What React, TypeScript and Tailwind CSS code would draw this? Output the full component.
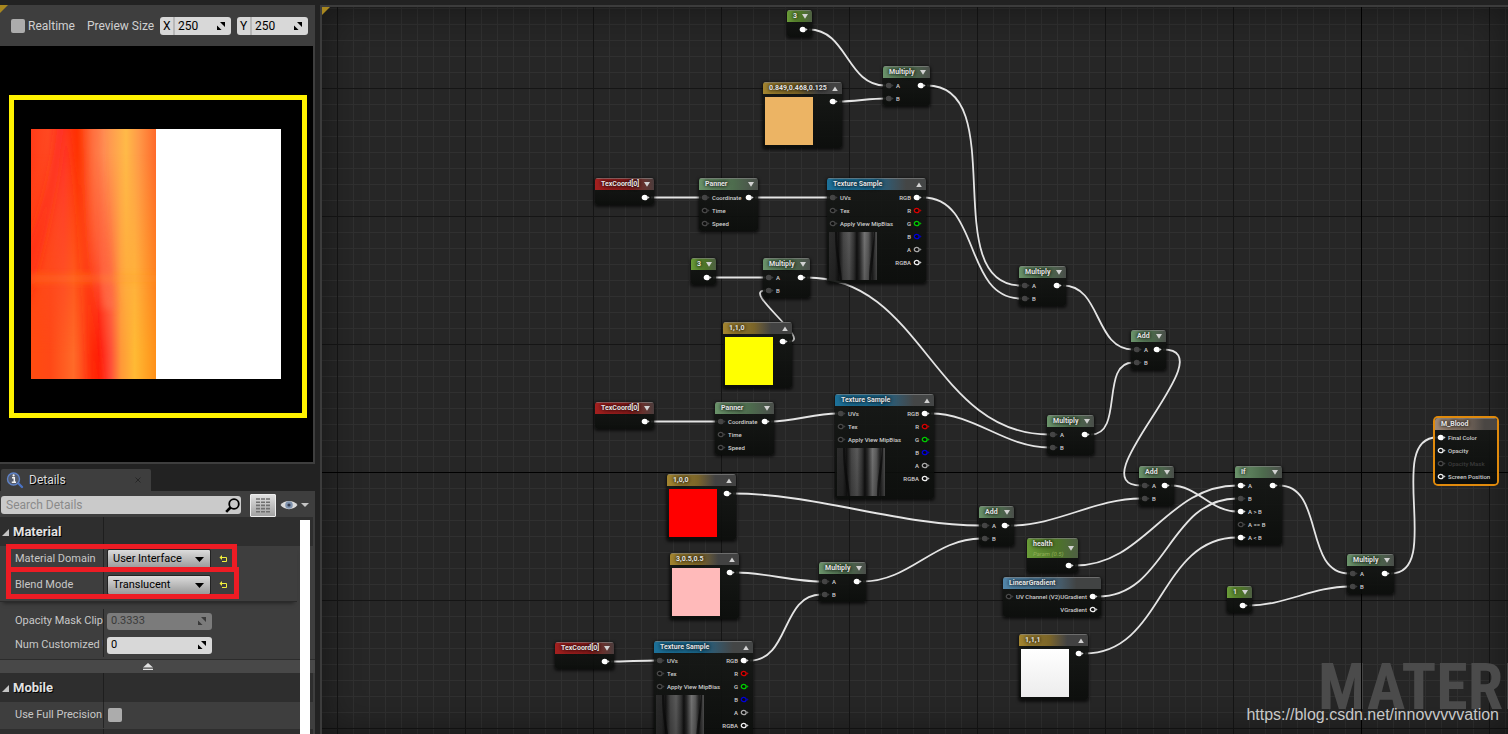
import React from 'react';

type PinKind = 'wired' | 'white' | 'open' | 'ring' | 'red' | 'green' | 'blue' | 'alpha';
type Tone = 'math' | 'constant' | 'vector' | 'coord' | 'texture' | 'gradient' | 'result';

interface Pin {
  label: string;
  kind: PinKind;
  muted?: boolean;
}

interface GraphNode {
  id: string;
  title: string;
  subtitle?: string;
  tone: Tone;
  x: number;
  y: number;
  w: number;
  inputs?: Pin[];
  outputs: Pin[];
  swatch?: string;
  texture?: boolean;
  open?: boolean;
  selected?: boolean;
}

interface Wire {
  from: string;
  to: string;
  input: number;
  bend?: number;
}

const PIN_COLORS: Record<PinKind, { stroke: string; fill: string }> = {
  wired: { stroke: '#454545', fill: '#454545' },
  white: { stroke: '#ffffff', fill: '#ffffff' },
  open: { stroke: '#484848', fill: '#0c0c0c' },
  ring: { stroke: '#f0f0f0', fill: '#0c0c0c' },
  red: { stroke: '#d80000', fill: '#0c0c0c' },
  green: { stroke: '#00cc00', fill: '#0c0c0c' },
  blue: { stroke: '#0000d8', fill: '#0c0c0c' },
  alpha: { stroke: '#a8a8a8', fill: '#0c0c0c' },
};

const TONES: Record<Tone, string> = {
  math: 'bg-linear-to-r from-[#6b946b] via-[#4d6b4d] via-60% to-[#4a4e4a]',
  constant: 'bg-linear-to-r from-[#6a9c38] via-[#4d7428] via-60% to-[#4e5f42]',
  vector: 'bg-linear-to-r from-[#a38530] via-[#7a6428] via-45% to-[#424242] to-70%',
  coord: 'bg-linear-to-r from-[#a3201f] via-[#871c1c] via-60% to-[#4a3c3c]',
  texture: 'bg-linear-to-r from-[#1d7199] via-[#1b6284] via-50% to-[#444646] to-80%',
  gradient: 'bg-linear-to-r from-[#5286aa] via-[#48708c] via-45% to-[#414343] to-75%',
  result: 'bg-linear-to-r from-[#a08a78] via-[#77685c] via-50% to-[#4a4643] to-80%',
};

const AB: Pin[] = [{ label: 'A', kind: 'wired' }, { label: 'B', kind: 'wired' }];
const OUT: Pin[] = [{ label: '', kind: 'white' }];
const PANNER_IN: Pin[] = [
  { label: 'Coordinate', kind: 'wired' },
  { label: 'Time', kind: 'open' },
  { label: 'Speed', kind: 'open' },
];
const SAMPLE_IN: Pin[] = [
  { label: 'UVs', kind: 'wired' },
  { label: 'Tex', kind: 'open' },
  { label: 'Apply View MipBias', kind: 'open' },
];
const SAMPLE_OUT: Pin[] = [
  { label: 'RGB', kind: 'white' },
  { label: 'R', kind: 'red' },
  { label: 'G', kind: 'green' },
  { label: 'B', kind: 'blue' },
  { label: 'A', kind: 'alpha' },
  { label: 'RGBA', kind: 'ring' },
];

const NODES: GraphNode[] = [
  { id: 'three1', title: '3', tone: 'constant', x: 465, y: 3, w: 25, outputs: OUT },
  { id: 'mul1', title: 'Multiply', tone: 'math', x: 561, y: 59, w: 47, inputs: AB, outputs: OUT },
  { id: 'orange', title: '0.849,0.468,0.125', tone: 'vector', x: 441, y: 75, w: 79, outputs: OUT, swatch: 'bg-[#ecb464]', open: true },
  { id: 'uv1', title: 'TexCoord[0]', tone: 'coord', x: 273, y: 171, w: 59, outputs: OUT },
  { id: 'pan1', title: 'Panner', tone: 'math', x: 377, y: 171, w: 59, inputs: PANNER_IN, outputs: OUT },
  { id: 'tex1', title: 'Texture Sample', tone: 'texture', x: 505, y: 171, w: 99, inputs: SAMPLE_IN, outputs: SAMPLE_OUT, texture: true, open: true },
  { id: 'three2', title: '3', tone: 'constant', x: 369, y: 251, w: 25, outputs: OUT },
  { id: 'mul2', title: 'Multiply', tone: 'math', x: 441, y: 251, w: 47, inputs: AB, outputs: OUT },
  { id: 'yellow', title: '1,1,0', tone: 'vector', x: 401, y: 315, w: 69, outputs: OUT, swatch: 'bg-[#ffff00]', open: true },
  { id: 'mul3', title: 'Multiply', tone: 'math', x: 697, y: 259, w: 47, inputs: AB, outputs: OUT },
  { id: 'add1', title: 'Add', tone: 'math', x: 809, y: 323, w: 35, inputs: AB, outputs: OUT },
  { id: 'uv2', title: 'TexCoord[0]', tone: 'coord', x: 273, y: 395, w: 59, outputs: OUT },
  { id: 'pan2', title: 'Panner', tone: 'math', x: 393, y: 395, w: 59, inputs: PANNER_IN, outputs: OUT },
  { id: 'tex2', title: 'Texture Sample', tone: 'texture', x: 513, y: 387, w: 99, inputs: SAMPLE_IN, outputs: SAMPLE_OUT, texture: true, open: true },
  { id: 'mul4', title: 'Multiply', tone: 'math', x: 725, y: 408, w: 47, inputs: AB, outputs: OUT },
  { id: 'red', title: '1,0,0', tone: 'vector', x: 345, y: 467, w: 69, outputs: OUT, swatch: 'bg-[#ff0000]', open: true },
  { id: 'add2', title: 'Add', tone: 'math', x: 817, y: 459, w: 35, inputs: AB, outputs: OUT },
  {
    id: 'if', title: 'If', tone: 'math', x: 913, y: 459, w: 47, outputs: OUT,
    inputs: [
      { label: 'A', kind: 'white' },
      { label: 'B', kind: 'wired' },
      { label: 'A > B', kind: 'white' },
      { label: 'A == B', kind: 'open' },
      { label: 'A < B', kind: 'white' },
    ],
  },
  { id: 'add3', title: 'Add', tone: 'math', x: 657, y: 499, w: 35, inputs: AB, outputs: OUT },
  { id: 'health', title: 'health', subtitle: 'Param (0.5)', tone: 'constant', x: 705, y: 531, w: 51, outputs: OUT },
  { id: 'pink', title: '3,0.5,0.5', tone: 'vector', x: 348, y: 546, w: 69, outputs: OUT, swatch: 'bg-[#ffbaba]', open: true },
  { id: 'mul5', title: 'Multiply', tone: 'math', x: 497, y: 555, w: 47, inputs: AB, outputs: OUT },
  {
    id: 'linear', title: 'LinearGradient', tone: 'gradient', x: 681, y: 570, w: 98,
    inputs: [{ label: 'UV Channel (V2)', kind: 'open' }],
    outputs: [{ label: 'UGradient', kind: 'white' }, { label: 'VGradient', kind: 'ring' }],
  },
  { id: 'one', title: '1', tone: 'constant', x: 905, y: 579, w: 25, outputs: OUT },
  { id: 'mul6', title: 'Multiply', tone: 'math', x: 1025, y: 547, w: 47, inputs: AB, outputs: OUT },
  { id: 'white', title: '1,1,1', tone: 'vector', x: 697, y: 627, w: 69, outputs: OUT, swatch: 'bg-linear-to-b from-white to-[#ececec]', open: true },
  { id: 'uv3', title: 'TexCoord[0]', tone: 'coord', x: 233, y: 635, w: 59, outputs: OUT },
  { id: 'tex3', title: 'Texture Sample', tone: 'texture', x: 332, y: 634, w: 99, inputs: SAMPLE_IN, outputs: SAMPLE_OUT, texture: true, open: true },
  {
    id: 'result', title: 'M_Blood', tone: 'result', x: 1113, y: 411, w: 62, outputs: [], selected: true,
    inputs: [
      { label: 'Final Color', kind: 'white' },
      { label: 'Opacity', kind: 'ring' },
      { label: 'Opacity Mask', kind: 'open', muted: true },
      { label: 'Screen Position', kind: 'ring' },
    ],
  },
];

const WIRES: Wire[] = [
  { from: 'three1', to: 'mul1', input: 0 },
  { from: 'orange', to: 'mul1', input: 1 },
  { from: 'uv1', to: 'pan1', input: 0 },
  { from: 'pan1', to: 'tex1', input: 0 },
  { from: 'mul1', to: 'mul3', input: 0 },
  { from: 'tex1', to: 'mul3', input: 1 },
  { from: 'three2', to: 'mul2', input: 0 },
  { from: 'yellow', to: 'mul2', input: 1, bend: 24 },
  { from: 'mul2', to: 'mul4', input: 0 },
  { from: 'uv2', to: 'pan2', input: 0 },
  { from: 'pan2', to: 'tex2', input: 0 },
  { from: 'tex2', to: 'mul4', input: 1 },
  { from: 'mul3', to: 'add1', input: 0 },
  { from: 'mul4', to: 'add1', input: 1 },
  { from: 'add1', to: 'add2', input: 0, bend: 66 },
  { from: 'red', to: 'add3', input: 0 },
  { from: 'pink', to: 'mul5', input: 0 },
  { from: 'uv3', to: 'tex3', input: 0 },
  { from: 'tex3', to: 'mul5', input: 1 },
  { from: 'mul5', to: 'add3', input: 1 },
  { from: 'add3', to: 'add2', input: 1 },
  { from: 'add2', to: 'if', input: 2 },
  { from: 'health', to: 'if', input: 0 },
  { from: 'linear', to: 'if', input: 1 },
  { from: 'white', to: 'if', input: 4 },
  { from: 'if', to: 'mul6', input: 0 },
  { from: 'one', to: 'mul6', input: 1 },
  { from: 'mul6', to: 'result', input: 0 },
];

const pinY = (node: GraphNode, index: number) => node.y + (node.subtitle ? 20 : 12) + 7 + index * 13;

const wirePath = ({ from, to, input, bend }: Wire) => {
  const a = NODES.find((n) => n.id === from)!;
  const b = NODES.find((n) => n.id === to)!;
  const x1 = a.x + a.w - 3;
  const y1 = pinY(a, 0) + 0.5;
  const x2 = b.x + 2;
  const y2 = pinY(b, input) + 0.5;
  const c = bend ?? (Math.abs(x2 - x1) + Math.abs(y2 - y1)) * 0.29;
  return `M${x1} ${y1} C${x1 + c} ${y1} ${x2 - c} ${y2} ${x2} ${y2}`;
};

const PinIcon = ({ kind }: { kind: PinKind }) => {
  const { stroke, fill } = PIN_COLORS[kind];
  return (
    <svg className="h-[7px] w-[9px] shrink-0" viewBox="0 0 9 7" aria-hidden="true">
      <ellipse cx="3.7" cy="3.5" rx="2.4" ry="2.2" fill={fill} stroke={stroke} strokeWidth="1.3" />
      <path d="M6.6 2 L8.6 3.5 L6.6 5Z" fill={stroke} opacity="0.8" />
    </svg>
  );
};

const FoldTexture = () => (
  <svg className="ml-[2px] mt-[2px] h-12 w-12" viewBox="0 0 48 48" aria-hidden="true">
    <defs>
      <linearGradient id="folds">
        <stop offset="0" stopColor="#2c2c2c" />
        <stop offset="0.12" stopColor="#282828" />
        <stop offset="0.2" stopColor="#121212" />
        <stop offset="0.3" stopColor="#464646" />
        <stop offset="0.42" stopColor="#5a5a5a" />
        <stop offset="0.52" stopColor="#343434" />
        <stop offset="0.58" stopColor="#101010" />
        <stop offset="0.64" stopColor="#2a2a2a" />
        <stop offset="0.74" stopColor="#747474" />
        <stop offset="0.82" stopColor="#5a5a5a" />
        <stop offset="0.9" stopColor="#1c1c1c" />
        <stop offset="1" stopColor="#505050" />
      </linearGradient>
      <linearGradient id="foldShade" x2="0" y2="1">
        <stop offset="0" stopColor="#000" stopOpacity="0" />
        <stop offset="1" stopColor="#000" stopOpacity="0.2" />
      </linearGradient>
    </defs>
    <rect width="48" height="48" fill="url(#folds)" />
    <path d="M8 0 C8 20 12 34 13 48 L11 48 C9 34 6 20 6 0Z M40 48 C40 30 44 16 45 0 L46 0 C46 18 43 32 42 48Z" fill="#080808" opacity="0.7" />
    <rect width="48" height="48" fill="url(#foldShade)" />
  </svg>
);

const NodeCard = ({ node }: { node: GraphNode }) => (
  <article
    className={`absolute overflow-hidden rounded-[3px] bg-linear-to-b from-[#161816]/90 to-[#0a0c0a]/90 text-[6px] leading-[13px] font-medium text-[#cfcfcf] ${
      node.selected ? 'ring-2 ring-[#e08a0c]' : 'shadow-[0_1px_3px_1px_rgba(0,0,0,0.65)]'
    }`}
    style={{ left: node.x, top: node.y, width: node.w }}
  >
    <header
      className={`flex items-center justify-between border-t border-[#8a8a8a]/60 pr-[4px] pl-[6px] ${TONES[node.tone]} ${
        node.subtitle ? 'h-[20px]' : 'h-[12px]'
      }`}
    >
      <div>
        <h3 className="text-[7px] leading-[9px] font-bold whitespace-nowrap text-[#e4e4e4] [text-shadow:0_0_3px_rgba(0,0,0,0.9),0_0_5px_rgba(0,0,0,0.8)]">{node.title}</h3>
        {node.subtitle && <p className="text-[6px] leading-[9px] font-normal whitespace-nowrap text-[#8fae57] italic">{node.subtitle}</p>}
      </div>
      {!node.selected && node.tone !== 'gradient' && (
        <button type="button" aria-label={`Toggle ${node.title}`} className="shrink-0">
          <svg className="h-[5px] w-[6px]" viewBox="0 0 6 5" fill="#d2d2d2">
            <path d={node.open ? 'M3 0.5 L5.8 5 L0.2 5Z' : 'M0 0 L6 0 L3 4.8Z'} />
          </svg>
        </button>
      )}
    </header>
    <div className="flex justify-between py-px">
      {node.swatch ? (
        <div className={`mt-[2px] mb-[2px] ml-[2px] size-12 ${node.swatch}`} />
      ) : (
        <div className={node.texture ? 'pb-[2px]' : ''}>
          <ul>
            {node.inputs?.map((pin) => (
              <li key={pin.label} className={`flex h-[13px] items-center gap-[2px] pl-[2px] whitespace-nowrap ${pin.muted ? 'text-[#3c3c3c]' : ''}`}>
                <PinIcon kind={pin.kind} />
                {pin.label}
              </li>
            ))}
          </ul>
          {node.texture && <FoldTexture />}
        </div>
      )}
      <ul className="pr-[4px]">
        {node.outputs.map((pin) => (
          <li key={pin.label} className="flex h-[13px] items-center justify-end gap-[2px]">
            {pin.label}
            <PinIcon kind={pin.kind} />
          </li>
        ))}
      </ul>
    </div>
  </article>
);

const Graph = () => (
  <main className="relative min-w-0 flex-1 overflow-hidden border-t-2 border-l-2 border-[#3c3c3c] bg-[#262626]">
    <div className="absolute inset-0 bg-[linear-gradient(to_right,#303030_1px,transparent_1px),linear-gradient(to_bottom,#303030_1px,transparent_1px)] bg-size-[16px_16px] bg-position-[15px_1px]" />
    <div className="absolute inset-0 bg-[linear-gradient(to_right,#151515_1px,transparent_1px),linear-gradient(to_bottom,#151515_1px,transparent_1px)] bg-size-[128px_128px] bg-position-[15px_81px]" />
    <div className="absolute inset-0 shadow-[inset_0_0_36px_rgba(0,0,0,0.45)]" />
    <p className="absolute top-[645px] left-[996px] font-['Liberation_Sans_Narrow','Roboto_Condensed',Roboto,sans-serif] text-[64px] leading-[72px] font-bold text-[#4b4b4b]">MATERIAL</p>
    <svg className="absolute inset-0 h-full w-full" fill="none" stroke="#e4e4e4" strokeWidth="1.8" aria-hidden="true">
      {/* origin axes */}
      <path d="M1039.5 0V2000M0 465.5H4000" stroke="#000" strokeWidth="1" />
      {WIRES.map((wire) => (
        <path key={`${wire.from}-${wire.to}-${wire.input}`} d={wirePath(wire)} />
      ))}
    </svg>
    {NODES.map((node) => (
      <NodeCard key={node.id} node={node} />
    ))}
    <a href="https://blog.csdn.net/innovvvvvation" className="absolute right-[9px] bottom-[9px] font-['Liberation_Sans',sans-serif] text-[16px] leading-[20px] text-[#c8c8c8]">
      https://blog.csdn.net/innovvvvvation
    </a>
    <CornerMark />
  </main>
);

const CornerMark = () => (
  <svg className="absolute top-0 left-0 h-[8px] w-[8px]" viewBox="0 0 8 8" aria-hidden="true">
    <path d="M0 0H8L0 8Z" fill="#a8871f" />
  </svg>
);

const DragIcon = ({ dim = false }: { dim?: boolean }) => (
  <svg className="pointer-events-none mr-[6px] h-[8px] w-[8px] shrink-0" viewBox="0 0 8 8" fill={dim ? '#3a3a3a' : '#000'} aria-hidden="true">
    <path d="M3 0H8V5Z M0 3.4V8H4.6Z" />
  </svg>
);

const SizeField = ({ axis }: { axis: string }) => (
  <label className="flex h-[18px] w-[71px] items-center rounded-[3px] bg-[#d8d8d8] text-[12px] text-black">
    <span className="w-[15px] shrink-0 border-r-2 border-[#b8b8b8] pl-[3px]">{axis}</span>
    <input className="w-0 min-w-0 flex-1 bg-transparent pl-[3px] outline-none" defaultValue="250" />
    <DragIcon />
  </label>
);

const PreviewTexture = () => (
  <svg className="h-[250px] w-[250px]" viewBox="0 0 250 250" role="img" aria-label="Material preview">
    <defs>
      <linearGradient id="flameTop">
        <stop offset="0" stopColor="#ff3c18" />
        <stop offset="0.14" stopColor="#ff4a22" />
        <stop offset="0.26" stopColor="#ff3a2a" />
        <stop offset="0.37" stopColor="#ff3c05" />
        <stop offset="0.46" stopColor="#ff5a28" />
        <stop offset="0.58" stopColor="#ff8c52" />
        <stop offset="0.76" stopColor="#ffba48" />
        <stop offset="0.86" stopColor="#ff9a48" />
        <stop offset="1" stopColor="#ff6a2a" />
      </linearGradient>
      <linearGradient id="flameBottom">
        <stop offset="0" stopColor="#ff4c10" />
        <stop offset="0.15" stopColor="#ff4816" />
        <stop offset="0.34" stopColor="#ff6a28" />
        <stop offset="0.46" stopColor="#ff3c14" />
        <stop offset="0.54" stopColor="#ff1a0a" />
        <stop offset="0.64" stopColor="#ff5038" />
        <stop offset="0.72" stopColor="#ff9838" />
        <stop offset="0.83" stopColor="#ffba34" />
        <stop offset="1" stopColor="#ff9018" />
      </linearGradient>
      <linearGradient id="fade" x2="0" y2="1">
        <stop offset="0.1" stopColor="#000" />
        <stop offset="0.9" stopColor="#fff" />
      </linearGradient>
      <mask id="lower">
        <rect width="125" height="250" fill="url(#fade)" />
      </mask>
      <clipPath id="left">
        <rect width="125" height="250" />
      </clipPath>
      <filter id="soft" x="-50%" width="200%">
        <feGaussianBlur stdDeviation="5 3" />
      </filter>
    </defs>
    <rect width="250" height="250" fill="#fff" />
    <g clipPath="url(#left)">
      <rect width="125" height="250" fill="url(#flameTop)" />
      <rect width="125" height="250" fill="url(#flameBottom)" mask="url(#lower)" />
      <g filter="url(#soft)">
        <path d="M41 -5 L47 -5 C52 80 58 170 69 255 L61 255 C57 170 50 80 41 -5Z" fill="#ff2600" />
        <path d="M34 -5 C24 70 14 120 -6 180 L-6 120 C8 90 20 50 26 -5Z" fill="#ff201c" opacity="0.5" />
        <path d="M66 -5 C68 60 68 120 82 180 L74 180 C62 120 62 60 60 -5Z" fill="#ff8058" opacity="0.6" />
        <rect x="-10" y="146" width="150" height="7" fill="#ff9c28" opacity="0.25" />
      </g>
    </g>
  </svg>
);

const Preview = () => (
  <section className="relative bg-[#3e3e3e] pr-[2px] pb-[2px]">
    <CornerMark />
    <div className="flex h-[41px] items-center pl-[11px] text-[12px] text-[#d0d0d0]">
      <label className="flex items-center gap-[3px]">
        <input type="checkbox" className="size-[14px] appearance-none rounded-[2px] bg-[#acacac]" />
        Realtime
      </label>
      <span className="ml-[12px] whitespace-nowrap">Preview Size</span>
      <div className="ml-auto flex gap-[6px] pr-[5px]">
        <SizeField axis="X" />
        <SizeField axis="Y" />
      </div>
    </div>
    <div className="relative flex h-[416px] items-center bg-black pl-[31px]">
      <PreviewTexture />
      <div className="absolute top-[49px] right-[6px] bottom-[44px] left-[9px] border-5 border-[#fff200]" />
    </div>
  </section>
);

const GroupTitle = ({ children }: { children: React.ReactNode }) => (
  <div className="flex h-[29px] w-[313px] bg-[#2e2e2e]">
    <h2 className="flex w-[104px] items-center gap-[4px] border-r border-[#1e1e1e] pl-[2px] text-[13px] font-bold text-[#e2e2e2] [text-shadow:1px_1px_0_#000]">
      {children && (
        <svg className="mt-[2px] h-[7px] w-[7px]" viewBox="0 0 7 7" fill="#c4c4c4" aria-hidden="true">
          <path d="M7 0V7H0Z" />
        </svg>
      )}
      {children}
    </h2>
  </div>
);

const Row = ({ id, label, tall, children }: { id: string; label: string; tall?: boolean; children: React.ReactNode }) => (
  <div className={`flex items-center ${tall ? 'h-[26px]' : 'h-[24px]'}`}>
    <label htmlFor={id} className="flex h-full w-[104px] shrink-0 items-center overflow-hidden border-r border-[#242424] pl-[15px] whitespace-nowrap">
      {label}
    </label>
    {children}
  </div>
);

const ComboRow = ({ id, label, value }: { id: string; label: string; value: string }) => (
  <Row id={id} label={label} tall>
    <div className="relative ml-[3px]">
      <select id={id} className="block h-[20px] w-[104px] appearance-none rounded-[2px] border border-[#222] bg-linear-to-b from-[#dcdcdc] to-[#9a9a9a] pl-[5px] text-[11px] leading-[16px] text-black">
        <option>{value}</option>
      </select>
      <svg className="pointer-events-none absolute top-[8px] right-[7px] h-[5px] w-[9px]" viewBox="0 0 9 5" aria-hidden="true">
        <path d="M0 0H9L4.5 5Z" fill="#000" />
      </svg>
    </div>
    <button type="button" aria-label={`Reset ${label}`} className="ml-[8px]">
      <svg className="h-[8px] w-[9px]" viewBox="0 0 9 8" fill="none" stroke="#f2f03c" aria-hidden="true">
        <path d="M1 2.5H7.5V6.5H3" />
        <path d="M3 0V5L0.5 2.5Z" fill="#f2f03c" stroke="none" />
      </svg>
    </button>
  </Row>
);

const NumberRow = ({ id, label, value, disabled }: { id: string; label: string; value: string; disabled?: boolean }) => (
  <Row id={id} label={label}>
    <div className={`ml-[3px] flex h-[17px] w-[105px] items-center rounded-[3px] ${disabled ? 'bg-[#7b7b7b] text-[#3a3a3a]' : 'bg-[#d8d8d8] text-black'}`}>
      <input id={id} disabled={disabled} defaultValue={value} className="w-0 min-w-0 flex-1 bg-transparent pl-[4px] outline-none" />
      <DragIcon dim={disabled} />
    </div>
  </Row>
);

const Details = () => (
  <section className="mt-[5px] flex min-h-0 flex-1 flex-col">
    <div className="ml-px flex h-[22px] w-[150px] shrink-0 items-center rounded-t-[2px] bg-[#3e3e3e] pl-[5px] text-[12px] text-[#dcdcdc]">
      <svg className="h-[18px] w-[18px]" viewBox="0 0 18 18" aria-hidden="true">
        <path d="M11.5 11.5L16 16" stroke="#4a73c4" strokeWidth="2.4" strokeLinecap="round" />
        <circle cx="7.5" cy="8" r="6" fill="#555c6c" stroke="#5f83c8" strokeWidth="1.4" />
        <path d="M6 6.8H8.3V11M5.8 11.2H10" stroke="#f4f4f4" strokeWidth="1.5" fill="none" />
        <circle cx="7.6" cy="4.4" r="1.1" fill="#f4f4f4" />
      </svg>
      <span className="ml-[5px] [text-shadow:1px_1px_0_#000]">Details</span>
      <button type="button" aria-label="Close Details" className="mr-[10px] ml-auto">
        <svg className="h-[6px] w-[6px]" viewBox="0 0 6 6" stroke="#262626" aria-hidden="true">
          <path d="M0.5 0.5L5.5 5.5M5.5 0.5L0.5 5.5" />
        </svg>
      </button>
    </div>
    <div className="relative min-h-0 flex-1 overflow-hidden bg-[#3e3e3e] text-[11px] text-[#c8c8c8]">
      <div className="flex h-[26px] items-center pt-[2px] pl-px text-[12px]">
        <div className="flex h-[18px] w-[240px] items-center rounded-[3px] bg-[#cacaca]">
          <input aria-label="Search Details" placeholder="Search Details" className="w-0 min-w-0 flex-1 bg-transparent pl-[5px] text-black outline-none placeholder:text-[#8a8a8a]" />
          <svg className="mr-px h-[15px] w-[15px]" viewBox="0 0 15 15" fill="none" stroke="#000" aria-hidden="true">
            <circle cx="9" cy="6" r="4.8" strokeWidth="1.8" />
            <path d="M5.5 9.5L1.2 13.8" strokeWidth="2.6" />
          </svg>
        </div>
        <button type="button" aria-label="Property matrix" className="ml-[9px] flex h-[23px] w-[26px] items-center justify-center rounded-[1px] border border-[#ececec] bg-linear-to-b from-[#e0e0e0] to-[#a2a2a2]">
          <svg className="h-[15px] w-[14px]" viewBox="0 0 14 15" stroke="#707070" strokeWidth="1.6" aria-hidden="true">
            <path d="M0 1H4M5 1H9M10 1H14M0 4.2H4M5 4.2H9M10 4.2H14M0 7.4H4M5 7.4H9M10 7.4H14M0 10.6H4M5 10.6H9M10 10.6H14M0 13.8H4M5 13.8H9M10 13.8H14" />
          </svg>
        </button>
        <button type="button" aria-label="View options" className="ml-[4px] flex items-center gap-[3px]">
          <svg className="h-[12px] w-[18px]" viewBox="0 0 18 12" aria-hidden="true">
            <path d="M0.5 6C4 0.5 14 0.5 17.5 6C14 11.5 4 11.5 0.5 6Z" fill="#dadada" />
            <circle cx="9" cy="6" r="3.8" fill="#7f92ad" />
            <circle cx="9" cy="6" r="1.6" fill="#333c50" />
          </svg>
          <svg className="h-[4px] w-[8px]" viewBox="0 0 8 4" aria-hidden="true">
            <path d="M0 0H8L4 4Z" fill="#c4c4c4" />
          </svg>
        </button>
      </div>

      <GroupTitle>Material</GroupTitle>
      <div className="w-[297px] border-b border-[#2a2a2a] pb-[3px] shadow-[0_4px_4px_-3px_rgba(0,0,0,0.5)]">
        <ComboRow id="domain" label="Material Domain" value="User Interface" />
        <ComboRow id="blend" label="Blend Mode" value="Translucent" />
      </div>
      <div className="pt-[7px] pb-[2px]">
        <NumberRow id="clip" label="Opacity Mask Clip Value" value="0.3333" disabled />
        <NumberRow id="uvs" label="Num Customized UVs" value="0" />
      </div>
      <button type="button" aria-label="Hide advanced" className="flex h-[14px] w-full items-center justify-center border-t border-[#2c2c2c] bg-[#484848] pr-[19px]">
        <svg className="h-[7px] w-[10px]" viewBox="0 0 10 7" fill="#e2e2e2" aria-hidden="true">
          <path d="M5 0L10 4.6H0Z M0 5.7H10V7H0Z" />
        </svg>
      </button>
      <GroupTitle>Mobile</GroupTitle>
      <div className="pb-px">
        <Row id="precision" label="Use Full Precision" tall>
          <input id="precision" type="checkbox" className="ml-[4px] size-[14px] appearance-none rounded-[2px] bg-[#acacac]" />
        </Row>
      </div>
      <GroupTitle>{null}</GroupTitle>

      <div className="absolute top-[29px] right-[5px] bottom-0 w-[10px] bg-white" />
      <div className="absolute top-[53px] left-[6px] h-[28px] w-[231px] border-5 border-[#ed1c24]" />
      <div className="absolute top-[76px] left-[6px] h-[32px] w-[233px] border-5 border-[#ed1c24]" />
    </div>
  </section>
);

const App: React.FC = () => (
  <div className="flex h-screen w-full overflow-hidden bg-[#222222] pt-[5px] font-[Roboto,sans-serif]">
    <aside className="mr-[5px] flex w-[315px] shrink-0 flex-col">
      <Preview />
      <Details />
    </aside>
    <Graph />
  </div>
);

export default App;
